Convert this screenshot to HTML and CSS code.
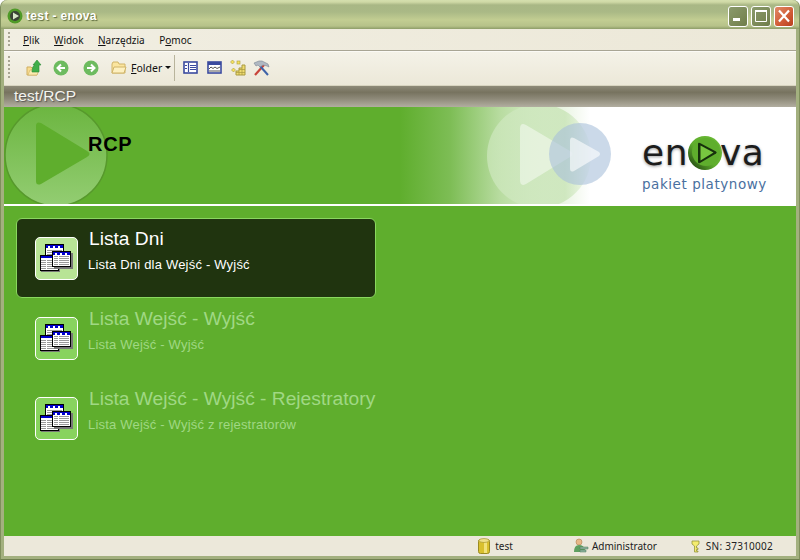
FILE: index.html
```html
<!DOCTYPE html>
<html lang="pl">
<head>
    <meta charset="UTF-8">
    <title>test - enova</title>
    <link rel="stylesheet" href="styles.css">
</head>
<body>
    <svg class="defs" width="0" height="0">
        <symbol id="grid" viewBox="0 0 33 29">
            <rect x="5.500" y=".5" width="18" height="14" fill="#fff" stroke="#000"/>
            <rect x="6" y="1" width="17" height="3" fill="#00c"/>
            <path d="M8 2h2v2H8zM13 2h2v2h-2zM18 2h2v2h-2z" fill="#fff"/>
            <path d="M7 6.500h15M7 8.500h15M7 10.500h15" stroke="#999"/>
            <rect x="1" y="12" width="19" height="16" fill="#777"/>
            <rect x=".5" y="11.500" width="18" height="15" fill="#fff" stroke="#000"/>
            <rect x="1" y="12" width="17" height="2" fill="#00c"/>
            <path d="M1 16.500h17M1 18.500h17M1 20.500h17M1 22.500h17M1 24.500h17" stroke="#999"/>
            <path d="M6.500 15v11" stroke="#fff"/>
            <rect x="14" y="9" width="19" height="16" fill="#777"/>
            <rect x="12.500" y="7.500" width="18" height="15" fill="#fff" stroke="#000"/>
            <rect x="13" y="8" width="17" height="3" fill="#00c"/>
            <path d="M15 9h2v2h-2zM20 9h2v2h-2zM25 9h2v2h-2z" fill="#fff"/>
            <path d="M14 12.500h15M14 14.500h15M14 16.500h15M14 18.500h15M14 20.500h15" stroke="#999"/>
            <path d="M18.500 12v10" stroke="#fff"/>
        </symbol>
        <symbol id="folder" viewBox="0 0 16 14">
            <path d="M1 3l1-2h5l1 2h6v9H1z" fill="#fbe59f" stroke="#d0b468"/>
            <path d="M1 12l2-6h12l-2 6z" fill="#fdf0c0" stroke="#d0b468"/>
        </symbol>
    </svg>

    <div class="window">
        <header class="titlebar">
            <svg class="app-icon" width="16" height="16" viewBox="0 0 16 16">
                <circle cx="8" cy="8" r="7.500" fill="#4f9a27"/>
                <circle cx="8" cy="8" r="5" fill="#3a4434"/>
                <path d="M6 4.500l6 3.500-6 3.500z" fill="#d8e8c8"/>
            </svg>
            <span class="title-text">test - enova</span>
            <div class="win-buttons">
                <div class="win-btn">
                    <svg width="18" height="18" viewBox="0 0 18 18"><rect x="4" y="11" width="7" height="3" fill="#fff"/></svg>
                </div>
                <div class="win-btn">
                    <svg width="18" height="18" viewBox="0 0 18 18"><path d="M3.500 3.500h11v11h-11z" fill="none" stroke="#fff"/><rect x="3" y="3" width="12" height="2" fill="#fff"/></svg>
                </div>
                <div class="win-btn close">
                    <svg width="18" height="18" viewBox="0 0 18 18"><path d="M4 3.500l10 11M14 3.500l-10 11" stroke="#fff" stroke-width="2.200"/></svg>
                </div>
            </div>
        </header>

        <nav class="menubar">
            <span class="grip"></span>
            <span class="menu-item"><u>P</u>lik</span>
            <span class="menu-item"><u>W</u>idok</span>
            <span class="menu-item"><u>N</u>arzędzia</span>
            <span class="menu-item">P<u>o</u>moc</span>
        </nav>

        <div class="toolbar">
            <span class="grip"></span>
            <svg class="tool up" width="18" height="18" viewBox="0 0 18 18">
                <path d="M2 8h4l1 1h5v7H2z" fill="#f8dc90" stroke="#cfae60"/>
                <path d="M3 16l2-5h9l-2 5z" fill="#fbeab0" stroke="#cfae60" stroke-width=".6"/>
                <path d="M7 13q0-6 3-7H8l4-5 4 5h-2v7H7z" fill="#3fae4a" stroke="#2c8a38" stroke-width=".6"/>
            </svg>
            <svg class="tool back" width="16" height="16" viewBox="0 0 16 16">
                <circle cx="8" cy="8" r="7.500" fill="#6dbb5f"/>
                <path d="M12 8H5M8 4.500L4.500 8 8 11.500" stroke="#fff" stroke-width="2" fill="none"/>
            </svg>
            <svg class="tool forward" width="16" height="16" viewBox="0 0 16 16">
                <circle cx="8" cy="8" r="7.500" fill="#6dbb5f"/>
                <path d="M4 8h7M8 4.500L11.500 8 8 11.500" stroke="#fff" stroke-width="2" fill="none"/>
            </svg>
            <svg class="tool folder" width="16" height="14"><use href="#folder"/></svg>
            <span class="folder-label"><u>F</u>older</span>
            <span class="caret"></span>
            <span class="tool-sep"></span>
            <svg class="tool view1" width="15" height="13" viewBox="0 0 15 13">
                <rect x="1" y="1" width="13" height="11" fill="#fff" stroke="#3a4a9f" stroke-width="1.600"/>
                <path d="M5.500 2v9" stroke="#3a4a9f" stroke-width="1.200"/>
                <path d="M2 4.500h2M2 7.500h2M7 4.500h6M7 6.500h6M7 8.500h6" stroke="#3a4a9f"/>
            </svg>
            <svg class="tool view2" width="15" height="13" viewBox="0 0 15 13">
                <rect x="1" y="1" width="13" height="11" fill="#fff" stroke="#3a4a9f" stroke-width="1.600"/>
                <path d="M1 1h13v3H1z" fill="#3a4a9f"/>
                <path d="M2 8l2-2 2 1.500 2-1.500 2 1.500 3-1.500M2 10h11" stroke="#555" fill="none"/>
            </svg>
            <svg class="tool view3" width="16" height="16" viewBox="0 0 16 16">
                <path d="M6 15V11h3V8h3V5h3v10z" fill="#f0dc70" stroke="#a89a40"/>
                <path d="M9 11v4M12 8v7M6 12.500h9M9 9.500h6" stroke="#a89a40" stroke-width=".7"/>
                <path d="M2.500 0l2 2-2 2-2-2zM3.500 8l2 2-2 2-2-2z" fill="#f6e25a" stroke="#a89a40" stroke-width=".6"/>
                <rect x="7" y="1" width="3" height="3" fill="#f6e25a" stroke="#a89a40" stroke-width=".6"/>
            </svg>
            <svg class="tool tools" width="17" height="16" viewBox="0 0 17 16">
                <path d="M2 15L11 5" stroke="#c8443a" stroke-width="2.200"/>
                <path d="M15 15L7 6" stroke="#3f63a8" stroke-width="2"/>
                <path d="M1 3l5-2h3l6 3 1 3-2-1-4-1-3 2-2-2-2 1z" fill="#b0b8c2" stroke="#7c8694" stroke-width=".6"/>
            </svg>
        </div>

        <div class="crumb">test/RCP</div>

        <section class="banner">
            <svg class="banner-art" width="792" height="97" viewBox="4 107 792 97">
                <defs>
                    <linearGradient id="disc" x1="0" y1="0" x2="0" y2="1">
                        <stop offset="0" stop-color="#6bb53f"/>
                        <stop offset="1" stop-color="#93cd72"/>
                    </linearGradient>
                    <linearGradient id="fade" x1="0" y1="0" x2="1" y2="0">
                        <stop offset="0" stop-color="#d4ebc6" stop-opacity=".6"/>
                        <stop offset=".75" stop-color="#c8e4b6" stop-opacity=".8"/>
                        <stop offset="1" stop-color="#c8e4b6" stop-opacity=".1"/>
                    </linearGradient>
                </defs>
                <circle cx="56" cy="155" r="51" fill="url(#disc)" stroke="#57992c" stroke-width="1.500"/>
                <path d="M41 123l46 28q5 3 0 6l-46 27q-5 2-5-3v-55q0-5 5-3z" fill="#5fae2d"/>
                <circle cx="539" cy="156" r="52" fill="url(#fade)"/>
                <path d="M526 125l44 26q5 3 0 6l-44 27q-6 3-6-4v-51q0-7 6-4z" fill="#fff" fill-opacity=".45"/>
                <circle cx="580" cy="154" r="31" fill="#a9c0da" fill-opacity=".6"/>
                <path d="M574 138l25 14q2 2 0 4l-25 15q-4 2-4-3v-27q0-5 4-3z" fill="#fff" fill-opacity=".6"/>
            </svg>
            <h1 class="banner-title">RCP</h1>
            <div class="logo">
                <div class="logo-word">
                    <span>en</span>
                    <svg width="36" height="36" viewBox="0 0 36 36">
                        <defs>
                            <linearGradient id="ring" x1="1" y1="0" x2="0" y2="1">
                                <stop offset="0" stop-color="#6cbb36"/>
                                <stop offset=".55" stop-color="#5fae2d"/>
                                <stop offset="1" stop-color="#14300a"/>
                            </linearGradient>
                        </defs>
                        <circle cx="19" cy="18" r="17" fill="url(#ring)"/>
                        <circle cx="20" cy="17" r="14" fill="#5fae2d"/>
                        <path d="M14 8l16 8.500q1.500 1 0 2l-16 9.500q-2 1-2-1V9q0-2 2-1z" fill="#16300c"/>
                        <path d="M14.500 10.500l13 7-13 8z" fill="#78c640"/>
                    </svg>
                    <span>va</span>
                </div>
                <div class="logo-sub">pakiet platynowy</div>
            </div>
        </section>

        <main class="content">
            <div class="entry selected">
                <div class="entry-icon"><svg width="33" height="29"><use href="#grid"/></svg></div>
                <div class="entry-text">
                    <div class="entry-title">Lista Dni</div>
                    <div class="entry-sub">Lista Dni dla Wejść - Wyjść</div>
                </div>
            </div>
            <div class="entry">
                <div class="entry-icon"><svg width="33" height="29"><use href="#grid"/></svg></div>
                <div class="entry-text">
                    <div class="entry-title">Lista Wejść - Wyjść</div>
                    <div class="entry-sub">Lista Wejść - Wyjść</div>
                </div>
            </div>
            <div class="entry">
                <div class="entry-icon"><svg width="33" height="29"><use href="#grid"/></svg></div>
                <div class="entry-text">
                    <div class="entry-title">Lista Wejść - Wyjść - Rejestratory</div>
                    <div class="entry-sub">Lista Wejść - Wyjść z rejestratorów</div>
                </div>
            </div>
        </main>

        <footer class="statusbar">
            <div class="status-item db">
                <svg width="12" height="17" viewBox="0 0 12 17">
                    <rect x=".5" y="1.500" width="11" height="14" rx="2" fill="#d9c02e" stroke="#9a8a20"/>
                    <rect x="6" y="2" width="3" height="13" fill="#f2e27a"/>
                    <ellipse cx="6" cy="2.500" rx="5" ry="2" fill="#efe08a" stroke="#9a8a20" stroke-width=".6"/>
                </svg>
                <span>test</span>
            </div>
            <div class="status-item user">
                <svg width="16" height="16" viewBox="0 0 16 16">
                    <circle cx="6" cy="4" r="3" fill="#e8b888" stroke="#b08050" stroke-width=".6"/>
                    <path d="M1 14q0-7 5-7t6 5v2z" fill="#5fa060"/>
                    <path d="M7 9h8v2H7zM7 12h6v2H7z" fill="#8fb4a0" stroke="#4f7a5a" stroke-width=".5"/>
                </svg>
                <span>Administrator</span>
            </div>
            <div class="status-item sn">
                <svg width="9" height="13" viewBox="0 0 9 13">
                    <path d="M1 1h7v3L5.500 6v2H7v1.500H5.500V11H7v1H3.500V6L1 4z" fill="#f4ec70" stroke="#8a8a30" stroke-width=".7"/>
                </svg>
                <span class="sn-text">SN: 37310002</span>
            </div>
        </footer>
    </div>
</body>
</html>
```

FILE: styles.css
```css
* {
    box-sizing: border-box;
}

html, body {
    margin: 0;
    padding: 0;
}

body {
    width: 800px;
    height: 560px;
    overflow: hidden;
    font-family: "Liberation Sans", sans-serif;
}

.defs {
    position: absolute;
}

.window {
    width: 800px;
    height: 560px;
    display: flex;
    flex-direction: column;
    padding: 0 3px 3px;
    background: #a3b07f;
    border-left: 1px solid #7f8f5c;
    border-right: 1px solid #7f8f5c;
    border-bottom: 1px solid #6f7f4f;
    border-radius: 7px 7px 0 0;
}

/* title bar */
.titlebar {
    height: 29px;
    margin: 0 -3px;
    padding: 3px 5px 0 6px;
    display: flex;
    align-items: center;
    gap: 3px;
    background: linear-gradient(#d5dfae 0, #d0d9a6 2px, #a9b785 5px, #aab986 12px, #c2cd92 20px, #b6c289 26px, #8d9c68 29px);
    border-radius: 7px 7px 0 0;
}

.title-text {
    font-size: 12px;
    font-weight: bold;
    color: #fff;
    text-shadow: 1px 1px 1px #5c6a3c;
    letter-spacing: .35px;
}

.win-buttons {
    margin-left: auto;
    display: flex;
    gap: 3px;
}

.win-btn {
    width: 20px;
    height: 21px;
    border: 1px solid #fff;
    border-radius: 3px;
    background: linear-gradient(135deg, #8a9a6c, #7c8a58 60%, #6f7d4a);
    display: flex;
}

.win-btn.close {
    background: linear-gradient(135deg, #e08a68, #d05a34 60%, #b8401f);
}

/* menu and toolbar */
.menubar {
    height: 22px;
    display: flex;
    align-items: center;
    background: linear-gradient(90deg, #f1eee2, #ece8d8);
    border-bottom: 1px solid #a8a594;
    font-family: "Noto Sans", sans-serif;
    font-size: 10px;
    color: #111;
    padding-left: 4px;
}

.menu-item {
    margin-left: 14.500px;
}

.grip + .menu-item {
    margin-left: 13px;
}

.grip {
    width: 2px;
    height: 16px;
    background: repeating-linear-gradient(#a8a594 0, #a8a594 2px, transparent 2px, transparent 4px);
}

.toolbar {
    height: 34px;
    display: flex;
    align-items: center;
    padding: 0 0 2px 4px;
    background: linear-gradient(#f4f2e8, #ece8d8);
    border-top: 1px solid #fbfaf5;
    font-family: "Noto Sans", sans-serif;
    font-size: 10.500px;
    color: #111;
}

.toolbar .grip {
    height: 24px;
}

.tool.up {
    margin-left: 15px;
}

.tool.back {
    margin-left: 10px;
}

.tool.forward {
    margin-left: 14px;
}

.tool.folder {
    margin-left: 12px;
}

.folder-label {
    margin-left: 4px;
}

.caret {
    margin-left: 3px;
    border-top: 3px solid #111;
    border-left: 3px solid transparent;
    border-right: 3px solid transparent;
}

.tool-sep {
    width: 1px;
    height: 26px;
    margin-left: 3px;
    background: #b8b49c;
}

.tool.view1 {
    margin-left: 8px;
}

.tool.view2 {
    margin-left: 9px;
}

.tool.view3 {
    margin-left: 8px;
}

.tool.tools {
    margin-left: 7px;
}

/* breadcrumb */
.crumb {
    height: 22px;
    flex: none;
    padding-left: 10px;
    border-top: 1px solid #d8d4c0;
    background: linear-gradient(#8e8a78, #77735f 30%, #8d8978 60%, #b2aea0);
    color: #f4f4ee;
    font-size: 15.500px;
    line-height: 20px;
    text-shadow: 1px 1px 1px #555;
}

/* banner */
.banner {
    position: relative;
    height: 99px;
    flex: none;
    display: flex;
    justify-content: space-between;
    border-bottom: 2px solid #fff;
    background: linear-gradient(90deg, #5fae2d 0, #5fae2d 396px, #7dbd55 446px, #b8dca0 496px, #fff 586px);
    overflow: hidden;
}

.banner-art {
    position: absolute;
    left: 0;
    top: 0;
}

.banner-title {
    position: relative;
    margin: 26px 0 0 84px;
    font-size: 20px;
    line-height: 22px;
    letter-spacing: .7px;
    color: #000;
    font-weight: bold;
}

.logo {
    position: relative;
    width: 154px;
    padding-top: 28px;
    font-family: "DejaVu Sans", sans-serif;
}

.logo-word {
    display: flex;
    align-items: center;
    height: 36px;
    font-size: 36px;
    line-height: 36px;
    letter-spacing: .5px;
    color: #1c1c1c;
    text-shadow: 0 1px 3px #999;
}

.logo-word svg {
    margin: 0 -2px;
}

.logo-sub {
    margin-top: 5px;
    font-size: 13.500px;
    line-height: 16px;
    letter-spacing: .55px;
    color: #4a70a0;
}

/* menu entries */
.content {
    flex: 1;
    padding: 12px;
    background: #5fae2d;
}

.entry {
    width: 360px;
    height: 80px;
    display: flex;
    gap: 10px;
    padding: 18px 0 0 18px;
    border: 1px solid transparent;
    border-radius: 6px;
    color: #a0d884;
}

.entry.selected {
    background: #20340f;
    border-color: #8ad75f;
    color: #fff;
}

.entry-icon {
    width: 43px;
    height: 43px;
    flex: none;
    display: flex;
    align-items: center;
    justify-content: center;
    background: #88d35e;
    border: 1px solid #fff;
    border-radius: 5px;
}

.entry.selected .entry-icon {
    background: #b8e496;
}

.entry-text {
    margin-top: -9px;
}

.entry-title {
    font-size: 19.200px;
    line-height: 22px;
    padding-left: 1px;
    white-space: nowrap;
}

.entry-sub {
    margin-top: 7px;
    font-size: 13px;
    line-height: 16px;
    letter-spacing: .2px;
    white-space: nowrap;
}

/* status bar */
.statusbar {
    height: 20px;
    flex: none;
    display: flex;
    align-items: center;
    justify-content: flex-end;
    padding-right: 23px;
    background: #ece8da;
    font-family: "Noto Sans", sans-serif;
    font-size: 10px;
    color: #222;
}

.status-item {
    display: flex;
    align-items: center;
}

.db {
    gap: 5px;
}

.user {
    margin-left: 60px;
    gap: 3px;
}

.sn {
    margin-left: 34px;
    gap: 6px;
}

.sn-text {
    letter-spacing: .25px;
}
```
